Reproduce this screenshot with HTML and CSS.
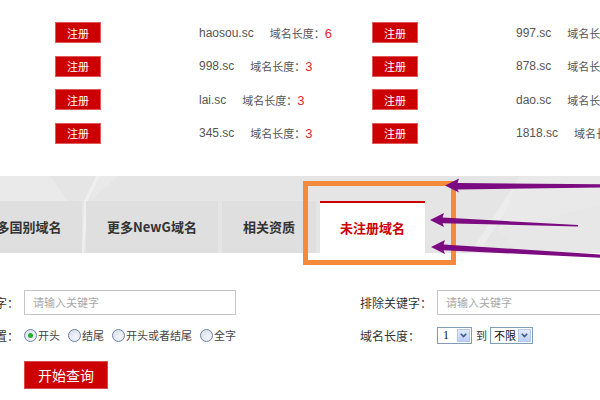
FILE: index.html
```html
<!DOCTYPE html>
<html lang="zh-CN">
<head>
<meta charset="utf-8">
<title>未注册域名</title>
<link rel="stylesheet" href="styles.css">
</head>
<body>
<div class="page">
  <section class="domains">
    <div class="drow">
      <div class="dcell"><a class="reg">注册</a><span class="dname">haosou.sc</span><span class="dlen">域名长度：<em>6</em></span></div>
      <div class="dcell"><a class="reg">注册</a><span class="dname">997.sc</span><span class="dlen">域名长度：<em>3</em></span></div>
    </div>
    <div class="drow">
      <div class="dcell"><a class="reg">注册</a><span class="dname">998.sc</span><span class="dlen">域名长度：<em>3</em></span></div>
      <div class="dcell"><a class="reg">注册</a><span class="dname">878.sc</span><span class="dlen">域名长度：<em>3</em></span></div>
    </div>
    <div class="drow">
      <div class="dcell"><a class="reg">注册</a><span class="dname">lai.sc</span><span class="dlen">域名长度：<em>3</em></span></div>
      <div class="dcell"><a class="reg">注册</a><span class="dname">dao.sc</span><span class="dlen">域名长度：<em>3</em></span></div>
    </div>
    <div class="drow">
      <div class="dcell"><a class="reg">注册</a><span class="dname">345.sc</span><span class="dlen">域名长度：<em>3</em></span></div>
      <div class="dcell"><a class="reg">注册</a><span class="dname">1818.sc</span><span class="dlen">域名长度：<em>4</em></span></div>
    </div>
  </section>

  <nav class="tabbar">
    <svg class="band-bg" width="600" height="77" viewBox="0 0 600 77">
      <polygon points="0,0 50,0 68,25 0,25" fill="#eaeaea"/>
      <polygon points="96,0 100,0 88,25 84,77 82,77 84,25" fill="#efefef"/>
      <polygon points="100,0 118,0 90,25" fill="#e9e9e9"/>
      <polygon points="470,77 520,0 530,0 478,77" fill="#ececec"/>
      <polygon points="520,0 600,0 600,30 498,54" fill="#e9e9e9"/>
      <polygon points="498,54 600,30 600,77 520,77" fill="#e7e7e7"/>
    </svg>
    <div class="tabs">
      <a class="tab t1">更多国别域名</a>
      <a class="tab t2">更多NewG域名</a>
      <a class="tab t3">相关资质</a>
      <a class="tab t4 active">未注册域名</a>
    </div>
  </nav>

  <form class="search">
    <div class="frow r1">
      <div class="field"><label>包含关键字：</label><input class="kw" type="text" placeholder="请输入关键字"></div>
      <div class="field"><label>排除关键字：</label><input class="kw" type="text" placeholder="请输入关键字"></div>
    </div>
    <div class="frow r2">
      <div class="field">
        <label>关键字位置：</label>
        <span class="opt"><input class="radio" type="radio" name="pos" checked>开头</span>
        <span class="opt"><input class="radio" type="radio" name="pos">结尾</span>
        <span class="opt"><input class="radio" type="radio" name="pos">开头或者结尾</span>
        <span class="opt"><input class="radio" type="radio" name="pos">全字</span>
      </div>
      <div class="field">
        <label>域名长度：</label>
        <span class="sel s1"><span class="v num">1</span><span class="btn"><svg width="7" height="5" viewBox="0 0 7 5"><polyline points="0.8,0.8 3.5,3.6 6.2,0.8" fill="none" stroke="#3d5a8f" stroke-width="1.6"/></svg></span></span>
        <span class="to">到</span>
        <span class="sel s2"><span class="v">不限</span><span class="btn"><svg width="7" height="5" viewBox="0 0 7 5"><polyline points="0.8,0.8 3.5,3.6 6.2,0.8" fill="none" stroke="#3d5a8f" stroke-width="1.6"/></svg></span></span>
      </div>
    </div>
    <div class="frow r3">
      <button class="go" type="button">开始查询</button>
    </div>
  </form>

  <div class="highlight"></div>
  <svg class="arrows" width="600" height="400" viewBox="0 0 600 400">
    <polygon points="445,185.5 459,178.5 457.5,183 600,184.3 600,187.6 457.5,189.5 459,192.5" fill="#7c0a80"/>
    <polygon points="430,220 444,213 442.5,217.5 578,225 578,226.4 442.5,223.2 444,227" fill="#7c0a80"/>
    <polygon points="431,247 445,240 443.5,244.5 600,254.5 600,257.8 443.5,250.2 445,254" fill="#7c0a80"/>
  </svg>
</div>
</body>
</html>
```

FILE: styles.css
```css
html, body {
  margin: 0;
  padding: 0;
  overflow: hidden;
  background: #fff;
}
body {
  width: 600px;
  height: 400px;
  font-family: "Liberation Sans", "Noto Sans CJK SC", sans-serif;
  color: #555;
}
.page {
  position: relative;
  width: 600px;
  height: 400px;
  overflow: hidden;
}

/* domain list */
.domains {
  padding: 22px 0 0 55px;
  display: flex;
  flex-direction: column;
  gap: 12.67px;
}
.drow {
  display: flex;
  height: 21px;
}
.dcell {
  width: 317px;
  flex: none;
  display: flex;
  align-items: center;
  white-space: nowrap;
}
.reg {
  width: 46px;
  height: 21px;
  flex: none;
  box-sizing: border-box;
  background: #cc0000;
  border: 1px solid #e05a5a;
  color: #fff;
  font: 11px "Noto Sans CJK SC", sans-serif;
  display: flex;
  align-items: center;
  justify-content: center;
  margin-right: 98px;
}
.dname {
  font: 12px "Liberation Sans", sans-serif;
  color: #555;
}
.dlen {
  margin-left: 16px;
  font: 11px "Noto Sans CJK SC", sans-serif;
  color: #555;
}
.dlen em {
  font: 13px "Liberation Sans", sans-serif;
  font-style: normal;
  color: #e0262b;
}

/* tab bar */
.tabbar {
  position: relative;
  margin-top: 32px;
  height: 77px;
  box-sizing: border-box;
  padding-top: 25px;
  background: #e5e5e5;
  overflow: hidden;
}
.band-bg {
  position: absolute;
  left: 0;
  top: 0;
}
.tabs {
  position: relative;
  display: flex;
  gap: 4px;
  margin-left: -37px;
  height: 52px;
}
.tab {
  flex: none;
  height: 52px;
  box-sizing: border-box;
  background: #dfdfdf;
  display: flex;
  align-items: center;
  justify-content: center;
  font: bold 13px "Noto Sans CJK SC", sans-serif;
  color: #333;
  white-space: nowrap;
}
.t1 { width: 119px; }
.t2 { width: 132px; }
.t3 { width: 94px; }
.t4 { width: 105px; }
.tab.active {
  background: #fff;
  color: #cc0000;
  border-top: 2px solid #cc0000;
}

/* search form */
.search {
  margin: 0 0 0 -53px;
  padding-top: 37px;
  font: 12px "Noto Sans CJK SC", sans-serif;
  color: #333;
}
.frow {
  display: flex;
  align-items: center;
}
.field {
  width: 413px;
  flex: none;
  display: flex;
  align-items: center;
  white-space: nowrap;
}
.field label {
  width: 77px;
  flex: none;
}
.kw {
  width: 212px;
  height: 25px;
  flex: none;
  box-sizing: border-box;
  margin: 0;
  border: 1px solid #c6c6c6;
  padding: 0 8px;
  font: 11px "Noto Sans CJK SC", sans-serif;
  color: #333;
  background: #fff;
  outline: none;
}
.kw::placeholder {
  color: #a8a8a8;
}
.r2 {
  margin-top: 12px;
  height: 17px;
}
.opt {
  display: flex;
  align-items: center;
  margin-right: 8px;
  font-size: 11px;
  color: #444;
}
.radio {
  appearance: none;
  -webkit-appearance: none;
  margin: 0 1px 0 0;
  width: 13px;
  height: 13px;
  border-radius: 50%;
  border: 1px solid #6b83a6;
  box-sizing: border-box;
  background: radial-gradient(circle at 60% 65%, #f4f6f9 0, #dfe4ec 70%, #c9d1de 100%);
  position: relative;
}
.radio:checked::after {
  content: "";
  position: absolute;
  left: 3px;
  top: 3px;
  width: 5px;
  height: 5px;
  border-radius: 50%;
  background: #22b02e;
}
.sel {
  display: inline-flex;
  align-items: center;
  height: 17px;
  box-sizing: border-box;
  border: 1px solid #7f9db9;
  background: #fff;
}
.s1 { width: 35px; }
.s2 { width: 43px; }
.sel .v {
  flex: 1;
  padding-left: 3px;
  font-size: 11px;
  color: #111;
  line-height: 15px;
}
.sel .v.num {
  font: 12px "Liberation Serif", serif;
  padding-left: 5px;
}
.sel .btn {
  width: 13px;
  height: 13px;
  margin-right: 1px;
  box-sizing: border-box;
  border: 1px solid #b7c8ee;
  background: linear-gradient(#e2eafd, #bccff7);
  display: flex;
  align-items: center;
  justify-content: center;
}
.to {
  margin: 0 3px 0 4px;
  font-size: 11px;
}
.r3 {
  margin-top: 17px;
  padding-left: 77px;
}
.go {
  width: 84px;
  height: 28px;
  margin: 0;
  box-sizing: border-box;
  background: #cc0000;
  border: 1px solid #de4a4a;
  color: #fff;
  font: 14px "Noto Sans CJK SC", sans-serif;
  padding: 0;
}

/* overlays */
.highlight {
  position: absolute;
  left: 303px;
  top: 181px;
  width: 153px;
  height: 84px;
  box-sizing: border-box;
  border: 5px solid #f58a3b;
}
.arrows {
  position: absolute;
  left: 0;
  top: 0;
  pointer-events: none;
}
```
